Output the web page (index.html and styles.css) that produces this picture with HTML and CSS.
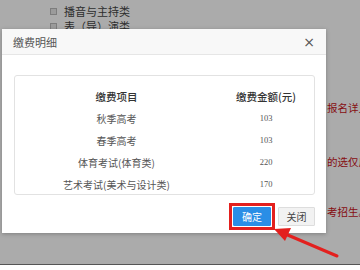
FILE: index.html
```html
<!DOCTYPE html>
<html lang="zh-CN">
<head>
  <meta charset="UTF-8" />
  <meta name="viewport" content="width=device-width, initial-scale=1.0"/>
  <title>缴费明细</title>
  <link rel="stylesheet" href="styles.css">
</head>
<body>
  <div class="screen">
    <!-- page behind the modal -->
    <div class="page">
      <div class="option"><span class="check"></span>播音与主持类</div>
      <div class="option"><span class="check"></span>表（导）演类</div>
      <div class="notes">
        <p class="note note-first">报名详见</p>
        <p class="note note-second">的选仅用于</p>
        <p class="note note-third">考招生。</p>
      </div>
    </div>

    <div class="overlay"></div>

    <!-- Modal -->
    <div class="modal">
      <div class="modal-header">
        <span class="modal-title">缴费明细</span>
        <span class="close">&times;</span>
      </div>
      <div class="modal-body">
        <div class="fee-box">
          <div class="fee-row fee-head">
            <span>缴费项目</span>
            <span>缴费金额(元)</span>
          </div>
          <div class="fee-row">
            <span>秋季高考</span>
            <span class="num">103</span>
          </div>
          <div class="fee-row">
            <span>春季高考</span>
            <span class="num">103</span>
          </div>
          <div class="fee-row">
            <span>体育考试(体育类)</span>
            <span class="num">220</span>
          </div>
          <div class="fee-row">
            <span>艺术考试(美术与设计类)</span>
            <span class="num">170</span>
          </div>
        </div>
      </div>
      <div class="modal-footer">
        <span class="highlight"><button class="btn btn-ok">确定</button></span>
        <button class="btn btn-close">关闭</button>
      </div>
    </div>

    <!-- annotation arrow -->
    <svg class="arrow" width="360" height="270" viewBox="0 0 360 270">
      <line x1="337" y1="256" x2="283" y2="233" stroke="#e3201e" stroke-width="3" stroke-linecap="round"/>
      <polygon points="274,229 291,228 285,241" fill="#e3201e"/>
    </svg>
  </div>
</body>
</html>
```

FILE: styles.css
```css
* { margin: 0; padding: 0; box-sizing: border-box; }

body {
  font-family: "Noto Sans CJK SC", "Noto Sans", sans-serif;
  background: #fff;
  width: 360px;
  height: 270px;
  overflow: hidden;
}

.screen {
  position: relative;
  height: 265px;
  border-bottom: 1px solid #555;
  overflow: hidden;
  background: #fff;
}

/* page behind */
.page {
  padding: 4px 0 0 50px;
  color: #444;
  font-size: 11px;
}

.option {
  display: flex;
  align-items: center;
  height: 15px;
  line-height: 15px;
}

.check {
  width: 7px;
  height: 7px;
  border: 1px solid #bbb;
  background: #e8e8e8;
  margin-right: 7px;
}

.notes {
  margin-left: 277px;
  color: #c8141a;
  font-size: 10.5px;
  white-space: nowrap;
}

.note { line-height: 14px; }
.note-first { margin-top: 67px; }
.note-second { margin-top: 40px; }
.note-third { margin-top: 36px; }

.overlay {
  position: absolute;
  top: 0; left: 0;
  width: 100%; height: 100%;
  background: rgba(0, 0, 0, 0.33);
}

/* modal */
.modal {
  position: absolute;
  left: 2px;
  top: 29px;
  width: 324px;
  height: 204px;
  background: #fff;
  box-shadow: 0 1px 4px rgba(0, 0, 0, 0.25);
}

.modal-header {
  height: 26px;
  background: #f8f8f8;
  border-bottom: 1px solid #e6e6e6;
  display: flex;
  align-items: center;
  justify-content: space-between;
  padding: 0 11px 0 11px;
}

.modal-title {
  font-size: 11px;
  color: #555;
}

.close {
  font-family: "DejaVu Sans", sans-serif;
  font-size: 14px;
  color: #555;
  line-height: 1;
}

.modal-body {
  padding: 20px 11px 0 12px;
}

.fee-box {
  height: 120px;
  border: 1px solid #e2e2e2;
  border-radius: 3px;
  padding-top: 9px;
}

.fee-row {
  display: grid;
  grid-template-columns: 203px 1fr;
  height: 22px;
  align-items: center;
  text-align: center;
  font-size: 10px;
  color: #555;
}

.fee-head {
  color: #333;
  font-weight: 500;
  font-size: 10.5px;
}

.num {
  font-family: "Liberation Serif", serif;
  font-size: 8.5px;
  color: #555;
}

.modal-footer {
  display: flex;
  justify-content: flex-end;
  gap: 7px;
  padding: 12px 11px 0 0;
}

.highlight {
  display: flex;
  outline: 3px solid #e3201e;
  outline-offset: 1px;
}

.btn {
  height: 19px;
  font-family: inherit;
  font-size: 10px;
  border: 1px solid #ddd;
  border-radius: 1px;
  cursor: pointer;
}

.btn-ok {
  width: 38px;
  background: #2a8ee6;
  border-color: #2a8ee6;
  color: #fff;
}

.btn-close {
  width: 37px;
  background: #f2f2f2;
  color: #444;
}

.arrow {
  position: absolute;
  top: 0; left: 0;
}
```
